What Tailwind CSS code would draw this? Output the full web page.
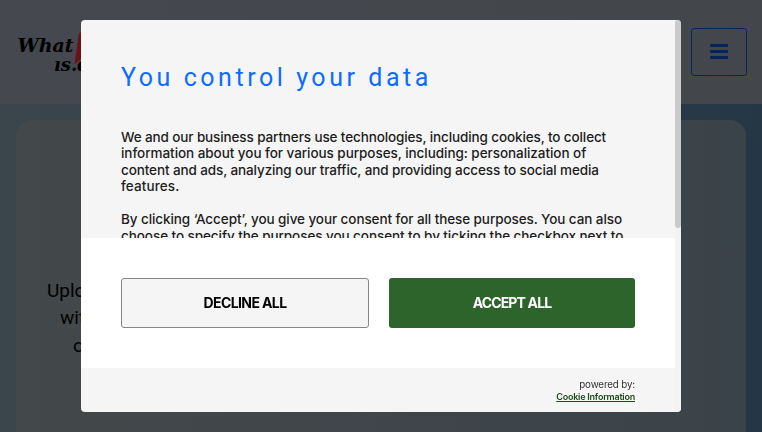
<!DOCTYPE html>
<html lang="en">
<head>
    <meta charset="UTF-8">
    <meta name="viewport" content="width=device-width, initial-scale=1.0">
    <title>You control your data</title>
    <script src="https://cdn.jsdelivr.net/npm/@tailwindcss/browser@4"></script>
</head>
<body class="h-screen flex flex-col overflow-hidden bg-linear-to-r from-[#3b454c] to-[#253745] font-['Roboto',sans-serif]">
<!-- Page header -->
<header class="h-26 shrink-0 flex items-start justify-between pl-4 pr-[15px] pt-7 bg-linear-to-r from-[#45484e] to-[#43474b]">
    <svg class="w-24 h-12" viewBox="0 0 96 48">
        <path d="M63 5 L58.5 36 L80 20 L80 0 Z" fill="#6b1015"/>
        <g font-family="DejaVu Serif" font-style="italic" font-weight="bold" font-size="18.5">
            <text x="1.5" y="23.5" textLength="56" lengthAdjust="spacingAndGlyphs">What</text>
            <text x="38" y="42.5" textLength="36" lengthAdjust="spacingAndGlyphs">ıs.d</text>
        </g>
    </svg>
    <button class="w-14 h-12 flex items-center justify-center border border-[#04255c] rounded-[3px]">
        <svg class="w-[18px] h-4" viewBox="0 0 18 16" fill="#04255c">
            <rect width="18" height="3" y="0" rx="0.6"/>
            <rect width="18" height="3" y="6" rx="0.6"/>
            <rect width="18" height="3" y="12" rx="0.6"/>
        </svg>
    </button>
</header>

<!-- Content card -->
<main class="flex-1 mx-4 mt-4 pt-[156.5px] pl-[31px] rounded-t-2xl bg-linear-to-r from-[#43484a] to-[#3b434a] text-[19px] leading-[27.5px] text-black">
    <p>Upload</p>
    <p class="pl-[13px]">with</p>
    <p class="pl-[26px]">of</p>
</main>

<!-- Consent dialog -->
<div class="fixed left-[81px] top-5 w-[600px] h-[392px] flex rounded bg-[#f5f5f5] overflow-hidden font-['Inter',sans-serif]">
    <div class="w-[594px] flex flex-col">
        <div class="h-[218px] overflow-hidden pl-10 pt-[42px] whitespace-nowrap">
            <h1 class="h-[67px] text-[25px] leading-[32px] tracking-[3.55px] text-[#0d6bff] font-['Roboto',sans-serif]">You control your data</h1>
            <div class="text-[13.5px] leading-[16.4px] text-[#1d1d1d] font-medium">
                <p class="tracking-[-0.12px]">We and our business partners use technologies, including cookies, to collect</p>
                <p class="tracking-[-0.055px]">information about you for various purposes, including: personalization of</p>
                <p class="tracking-[-0.11px]">content and ads, analyzing our traffic, and providing access to social media</p>
                <p class="tracking-[0.1px]">features.</p>
                <p class="mt-[16.4px] tracking-[-0.085px]">By clicking ‘Accept’, you give your consent for all these purposes. You can also</p>
                <p class="pt-px tracking-[-0.07px]">choose to specify the purposes you consent to by ticking the checkbox next to</p>
            </div>
        </div>
        <div class="h-[130px] pt-10 px-10 flex gap-5 bg-white text-sm font-bold">
            <button class="w-[248px] h-[50px] border border-[#858585] rounded-[3px] bg-[#f5f5f5] text-black tracking-[-0.6px]">DECLINE ALL</button>
            <button class="w-[246px] h-[50px] rounded-[3px] bg-[#2c642c] text-white tracking-[-0.85px]">ACCEPT ALL</button>
        </div>
        <div class="flex-1 pt-[11px] pr-10 text-right text-[10px] leading-3">
            <p class="text-[#333] tracking-[-0.15px] text-[9.8px]">powered by:</p>
            <a class="block font-semibold underline text-[9px] leading-3 text-[#1c4a1c] tracking-[-0.23px]" href="#">Cookie Information</a>
        </div>
    </div>
    <!-- Scrollbar -->
    <div class="flex-1 bg-[#f3f3f3]">
        <div class="h-[208px] rounded-[3px] bg-[#c9caca]"></div>
    </div>
</div>
</body>
</html>
